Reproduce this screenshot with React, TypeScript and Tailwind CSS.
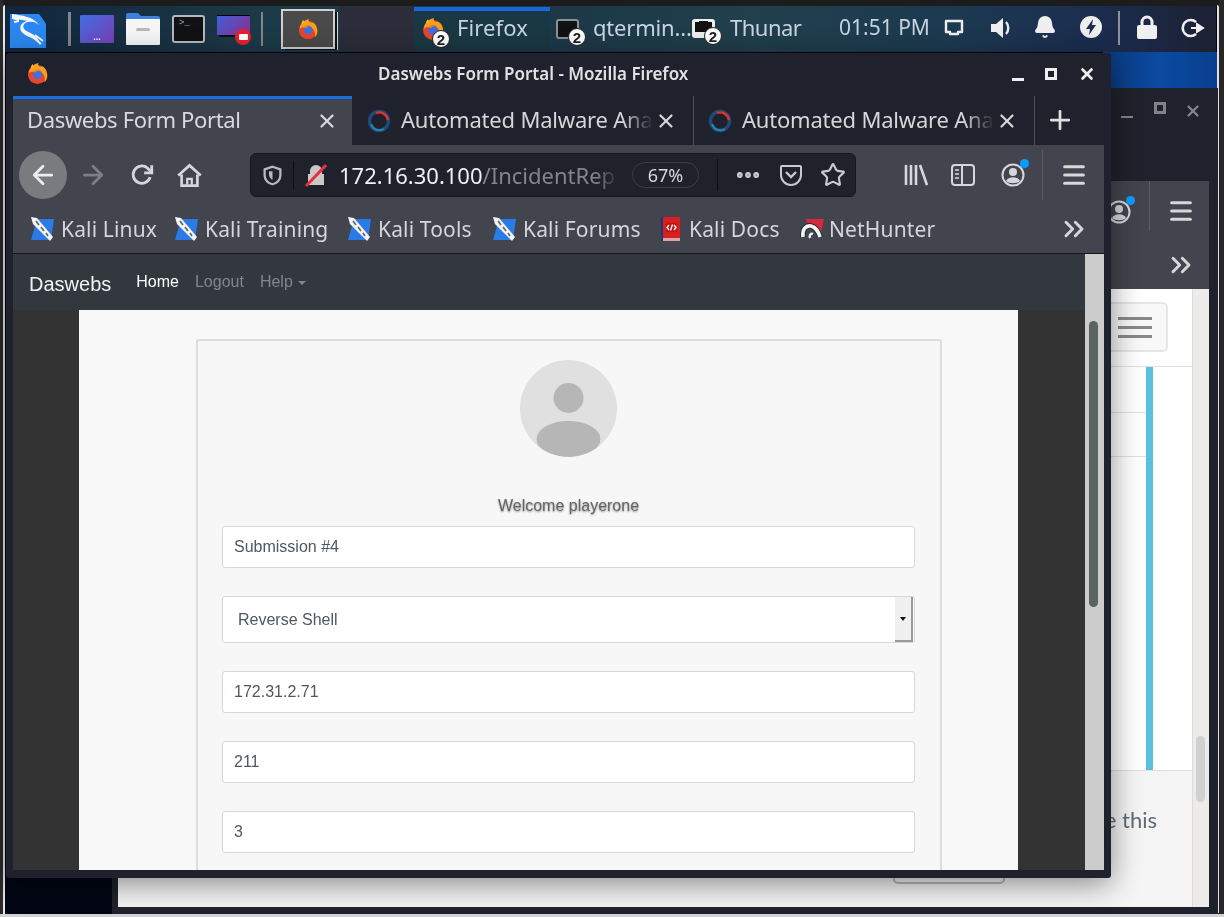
import React from "react";
import { ArrowLeft, ArrowRight, X, Plus, Star, Menu, ChevronsRight, Bell, MoreHorizontal } from "lucide-react";

function FirefoxIcon({ size = 24 }: { size?: number }) {
  return (
    <svg width={size} height={size} viewBox="0 0 24 24" className="shrink-0">
      <circle cx="12" cy="13" r="10" fill="#e8452c" />
      <path d="M3 12C3 6 8 2 13 1c-1 2 0 3 2 4 3-1 6 2 7 7 1 5-1 8-3 9 2-4 0-8-3-10-2-2-5-3-6-1-3 0-6 0-7 2z" fill="#f9a01b" />
      <path d="M5 6c0-1 1-3 2-4 0 2 1 3 2 3z" fill="#fbc02d" />
      <circle cx="12" cy="13" r="4.8" fill="#3f6fe0" />
      <path d="M7 10c2-2 6-3 9 0-2-1-5-1-6 1-1 0-2 0-3-1z" fill="#f57c1f" />
    </svg>
  );
}

function Badge({ className }: { className: string }) {
  return (
    <span className={`absolute flex h-[18px] w-[18px] items-center justify-center rounded-full border border-[#222] bg-white font-['Liberation_Sans',sans-serif] text-[15px] font-bold leading-none text-[#222] ${className}`}>
      2
    </span>
  );
}

function MalwareIcon() {
  return (
    <svg width="24" height="24" viewBox="0 0 24 24" className="shrink-0">
      <circle cx="12" cy="12" r="9.5" fill="none" stroke="#1f4a78" strokeWidth="3.4" />
      <path d="M9 4a9 9 0 0 1 12 7" fill="none" stroke="#e0322d" strokeWidth="2.4" />
      <path d="M4 15a9 9 0 0 0 13 5" fill="none" stroke="#2f83b8" strokeWidth="2" />
      <circle cx="12" cy="12" r="6.5" fill="#1f222c" />
    </svg>
  );
}

function KaliMark() {
  return (
    <svg width="26" height="26" viewBox="0 0 26 26" className="shrink-0">
      <path d="M8 3h17l-3 21H2z" fill="#2b7be6" />
      <path d="M2 1l6 1 16 19-3 4L4 8z" fill="#f4f4f4" />
      <path d="M7 5l3 4M12 11l3 4M17 17l2 3" stroke="#6a6a6a" strokeWidth="1.8" />
    </svg>
  );
}

function DocsMark() {
  return (
    <svg width="20" height="26" viewBox="0 0 20 26" className="shrink-0">
      <rect x="1" y="1" width="18" height="21" fill="#d81e1e" />
      <rect x="0" y="1" width="2" height="24" fill="#23356e" />
      <rect x="2" y="22" width="17" height="3" fill="#d8a6a6" />
      <rect x="5" y="7" width="11" height="9" rx="1" fill="#c01515" />
      <path d="M8 9l-2 2.5 2 2.5M13 9l2 2.5-2 2.5M11.5 8.5l-2 6" fill="none" stroke="#fff" strokeWidth="1.3" />
    </svg>
  );
}

function HunterMark() {
  return (
    <svg width="24" height="22" viewBox="0 0 24 22" className="shrink-0">
      <path d="M5 1h19l-4 18L9 7z" fill="#d8263c" />
      <path d="M3 19c-1-8 3-12 8-11 5 1 7 5 9 11" fill="none" stroke="#2a2a2a" strokeWidth="5.5" />
      <path d="M3 19c-1-8 3-12 8-11 5 1 7 5 9 11" fill="none" stroke="#f4f4f4" strokeWidth="3.6" />
      <path d="M10 20c-1-3 1-5 3-4" fill="none" stroke="#f4f4f4" strokeWidth="2.4" />
    </svg>
  );
}

function PanelIcons() {
  return (
    <div className="flex h-full items-center">
      <svg width="36" height="37" viewBox="0 0 36 37" className="ml-[10px] shrink-0">
        <path d="M0 3h29l3 4 4 6v24H0z" fill="#2a88f0" />
        <path d="M2 3c5 1 10 1 15 3 5 1 9 4 12 8-3-3-7-4-11-3-5 1-6 5-3 8 4 3 10 4 13 9 1 2 2 3 2 6-3-5-8-7-13-9-6-3-8-7-6-11 1-2 3-3 6-4-4-1-9-2-15-2z" fill="#f5f7fa" />
        <path d="M2 7l7 2M4 11l5-1M25 24l8 6M23 26l8 7" stroke="#f5f7fa" strokeWidth="1.8" />
      </svg>
      <div className="ml-[22px] h-[34px] w-[3px] shrink-0 bg-[#7f878c]" />
      <div className="ml-[9px] flex h-[28px] w-[34px] shrink-0 items-end justify-center rounded-[1px] bg-[linear-gradient(135deg,#3f6ee0,#7b3fb8)] pb-[1px] font-['Liberation_Sans',sans-serif] text-[9px] font-bold leading-[9px] text-white">...</div>
      <svg width="34" height="32" viewBox="0 0 34 32" className="ml-[12px] shrink-0">
        <path d="M0 2a2 2 0 0 1 2-2h10l3 3h17a2 2 0 0 1 2 2v6H0z" fill="#3c80e0" />
        <rect y="6" width="34" height="26" rx="1" fill="#f6f6f6" />
        <rect x="10" y="15" width="14" height="3" rx="1.5" fill="#b9b9b9" />
      </svg>
      <div className="ml-[12px] h-[28px] w-[33px] shrink-0 rounded-[3px] border-2 border-[#b5b8ba] bg-[#101214] pl-[5px] pt-[2px] font-['Liberation_Mono',monospace] text-[9px] leading-[9px] text-[#aaa]">&gt;_</div>
      <div className="relative ml-[12px] h-[28px] w-[33px] shrink-0">
        <div className="h-[20px] w-[33px] border-t border-black bg-[linear-gradient(135deg,#3f5fd8,#8b2f8f)]" />
        <div className="mx-[2px] h-[2px] bg-[#111]" />
        <div className="absolute left-[18px] top-[14px] flex h-[16px] w-[16px] items-center justify-center rounded-full bg-[#e8202c]">
          <div className="h-[6px] w-[9px] rounded-[1px] bg-white" />
        </div>
      </div>
      <div className="ml-[11px] h-[34px] w-[2px] shrink-0 bg-[#7f878c]" />
      <div className="relative ml-[18px] flex h-[40px] w-[54px] shrink-0 items-center justify-center border-2 border-[#d0d0d0] bg-[#4a4a4a] shadow-[3px_2px_0_-1px_#111,4px_2px_0_-1px_#d8d8d8]">
        <FirefoxIcon size={22} />
      </div>
    </div>
  );
}

function Task({ label, icon, active, width, tracking }: { label: string; icon: React.ReactNode; active?: boolean; width: string; tracking: string }) {
  return (
    <div className={`relative flex h-full shrink-0 items-center ${width} ${active ? "bg-[#1a3843]" : ""}`}>
      {active && <div className="absolute left-0 right-0 top-[1px] h-[4px] bg-[#1668d8]" />}
      {icon}
      <span className={`mb-[4px] whitespace-nowrap font-['Noto_Sans',sans-serif] text-[22px] leading-none text-[#c8d4e2] ${tracking}`}>{label}</span>
    </div>
  );
}

function TopPanel() {
  return (
    <div className="absolute left-0 right-[8px] top-[6px] flex h-[46px] items-center bg-[linear-gradient(90deg,#11253d_0%,#1c3a48_22%,#1c3847_45%,#213f4c_62%,#1c3a50_78%,#1b2d50_90%,#1c2032_100%)]">
      <div className="h-[46px] w-[340px] shrink-0"><PanelIcons /></div>
      <div className="h-full w-[74px] shrink-0 bg-[#2b2e3a]" />
      <Task
        active
        width="w-[136px]"
        label="Firefox"
        tracking="tracking-[0.1px]"
        icon={
          <span className="relative ml-[7px] mr-[15px] block h-[24px] w-[21px]">
            <FirefoxIcon size={24} />
            <Badge className="left-[11px] top-[13px]" />
          </span>
        }
      />
      <Task
        width="w-[136px]"
        label="qtermin…"
        tracking="tracking-[-0.2px]"
        icon={
          <span className="relative ml-[6px] mr-[15px] block h-[20px] w-[22px]">
            <span className="block h-[20px] w-[23px] rounded-[3px] border-2 border-[#8c9092] bg-[#101214]" />
            <Badge className="left-[12px] top-[9px]" />
          </span>
        }
      />
      <Task
        width="w-[153px]"
        label="Thunar"
        tracking="tracking-[-0.5px]"
        icon={
          <span className="relative ml-[6px] mr-[16px] block h-[20px] w-[22px]">
            <svg width="23" height="19" viewBox="0 0 23 19">
              <rect x="0" y="0" width="23" height="19" rx="3" fill="#eee" />
              <path d="M3 3h4v-1h9v1h4v10h-17z" fill="#111" />
            </svg>
            <Badge className="left-[12px] top-[8px]" />
          </span>
        }
      />
      <span className="mb-[4px] shrink-0 whitespace-nowrap font-['Noto_Sans',sans-serif] text-[21px] leading-none text-[#c8d4e2]">01:51 PM</span>
      <div className="flex shrink-0 items-center">
        <svg width="20" height="18" viewBox="0 0 20 18" className="ml-[14px] mb-[3px] shrink-0">
          <path d="M2 2h16v11h-4v2H6v-2H2z" fill="none" stroke="#efefef" strokeWidth="2.4" strokeLinejoin="round" />
        </svg>
        <svg width="26" height="26" viewBox="0 0 26 26" className="ml-[24px] mb-[3px] shrink-0">
          <path d="M3 9h5l7-6v20l-7-6H3z" fill="#efefef" />
          <path d="M18 7c3 3 3 9 0 12" fill="none" stroke="#efefef" strokeWidth="2.4" />
        </svg>
        <Bell size={24} className="ml-[19px] mb-[4px] shrink-0 fill-[#efefef] text-[#efefef]" />
        <svg width="22" height="22" viewBox="0 0 22 22" className="ml-[23px] mb-[4px] shrink-0">
          <circle cx="11" cy="11" r="11" fill="#efefef" />
          <path d="M13 3l-7 10h4l-1 6 7-10h-4z" fill="#1c2e4e" />
        </svg>
        <div className="ml-[16px] mb-[3px] h-[34px] w-[2px] shrink-0 bg-[#8d9499]" />
        <svg width="22" height="26" viewBox="0 0 22 26" className="ml-[16px] mb-[4px] shrink-0">
          <path d="M6 12V8a5 5 0 0 1 10 0v4" fill="none" stroke="#efefef" strokeWidth="3" />
          <rect x="1" y="11" width="20" height="14" rx="2" fill="#efefef" />
        </svg>
        <svg width="24" height="20" viewBox="0 0 24 20" className="ml-[23px] mb-[3px] shrink-0">
          <path d="M15 4a8 8 0 1 0 0 12" fill="none" stroke="#efefef" strokeWidth="2.6" />
          <path d="M10 10h8M16 6l6 4-6 4z" fill="#efefef" stroke="#efefef" strokeWidth="2" />
        </svg>
      </div>
    </div>
  );
}

function BrowserTab({ title }: { title: string }) {
  return (
    <div className="flex h-[49px] w-[341px] shrink-0 items-center border-r border-[#4a4d56] pl-[14px]">
      <MalwareIcon />
      <span className="mb-[2px] ml-[10px] w-[252px] whitespace-nowrap text-[22px] leading-normal tracking-[-0.2px] text-[#d4d6da] [mask-image:linear-gradient(90deg,#000_88%,transparent)]">{title}</span>
      <X size={22} strokeWidth={2.4} className="ml-[2px] text-[#d4d6da]" />
    </div>
  );
}

function Field({ value }: { value: string }) {
  return (
    <div className="flex h-[42px] items-center rounded-[3px] border border-[#d8d8d8] bg-white pl-[11px] text-[16px] text-[#50575e]">{value}</div>
  );
}

const bookmarks = [
  { label: "Kali Linux", width: "w-[144px]", icon: <KaliMark />, gap: "ml-[6px]" },
  { label: "Kali Training", width: "w-[173px]", icon: <KaliMark />, gap: "ml-[6px]" },
  { label: "Kali Tools", width: "w-[145px]", icon: <KaliMark />, gap: "ml-[6px]" },
  { label: "Kali Forums", width: "w-[170px]", icon: <KaliMark />, gap: "ml-[6px]" },
  { label: "Kali Docs", width: "w-[139px]", icon: <DocsMark />, gap: "ml-[8px]" },
  { label: "NetHunter", width: "w-[140px]", icon: <HunterMark />, gap: "ml-[5px]" },
];

function Firefox() {
  return (
    <div className="absolute left-[6px] top-[53px] z-10 h-[825px] w-[1105px] rounded-[3px] bg-[#1f222c] font-['Noto_Sans',sans-serif] shadow-[0_6px_30px_rgba(0,0,0,0.45)]">
      <div className="relative flex h-[43px] items-center">
        <span className="ml-[20px] mb-[3px]"><FirefoxIcon size={23} /></span>
        <span className="absolute left-[372px] top-[10px] whitespace-nowrap text-[17px] font-semibold leading-[22px] text-[#dfe1e5]">Daswebs Form Portal - Mozilla Firefox</span>
        <div className="ml-auto mr-[15px] mb-[1px] flex items-center gap-[21px]">
          <div className="mt-[10px] h-[3px] w-[12px] bg-[#eee]" />
          <div className="h-[12px] w-[12px] border-[3px] border-[#eee]" />
          <X size={18} strokeWidth={3.5} className="text-[#eee]" />
        </div>
      </div>
      <div className="ml-[7px] w-[1091px]">
        <div className="flex h-[49px] items-center">
          <div className="flex h-[49px] w-[339px] shrink-0 items-center border-t-[3px] border-[#1a6fe0] bg-[#42454e] pl-[14px]">
            <span className="mb-[7px] whitespace-nowrap text-[22px] leading-none tracking-[-0.35px] text-[#d8dadf]">Daswebs Form Portal</span>
            <X size={22} strokeWidth={2.4} className="ml-auto mr-[14px] mb-[2px] text-[#d8dadf]" />
          </div>
          <div className="w-[1px]" />
          <BrowserTab title="Automated Malware Ana" />
          <BrowserTab title="Automated Malware Ana" />
          <Plus size={30} strokeWidth={2.2} className="ml-[10px] mb-[2px] text-[#e0e0e0]" />
        </div>
        <div className="flex h-[60px] items-center bg-[#42454e] text-[#d6d7da]">
          <div className="ml-[6px] flex h-[48px] w-[48px] shrink-0 items-center justify-center rounded-full bg-[#7a7b7f]">
            <ArrowLeft size={30} strokeWidth={2.2} className="text-[#ecedee]" />
          </div>
          <ArrowRight size={30} strokeWidth={2.2} className="ml-[11px] shrink-0 text-[#7d7f85]" />
          <svg width="26" height="26" viewBox="0 0 24 24" className="ml-[21px] shrink-0">
            <path d="M19.5 14a8 8 0 1 1-2.5-8.5l3 3" fill="none" stroke="#d6d7da" strokeWidth="2.6" />
            <path d="M21 3v7h-7" fill="none" stroke="#d6d7da" strokeWidth="2.6" />
          </svg>
          <svg width="27" height="27" viewBox="0 0 24 24" className="ml-[21px] shrink-0">
            <path d="M2 12L12 3l10 9" fill="none" stroke="#d6d7da" strokeWidth="2.4" />
            <path d="M5 11v10h14V11" fill="none" stroke="#d6d7da" strokeWidth="2.4" />
            <path d="M10 20v-5h4v5" fill="none" stroke="#d6d7da" strokeWidth="2" />
          </svg>
          <div className="ml-[47px] flex h-[44px] w-[606px] shrink-0 items-center rounded-[6px] border border-[#15171d] bg-[#20222b]">
            <svg width="21" height="23" viewBox="0 0 24 24" className="ml-[11px] shrink-0">
              <path d="M12 2l9 3v7c0 5-4 9-9 10-5-1-9-5-9-10V5z" fill="none" stroke="#b8b9bd" strokeWidth="2.6" />
              <path d="M12 7h-4v4c0 2 2 5 4 6z" fill="#b8b9bd" />
            </svg>
            <div className="ml-[10px] h-[28px] w-[1px] shrink-0 bg-[#0c0d10]" />
            <svg width="22" height="24" viewBox="0 0 22 24" className="ml-[11px] shrink-0">
              <path d="M5 11V8a6 6 0 0 1 12 0v3M3 11h16v11H3z" fill="#c8c8c8" />
              <path d="M1 23L21 2" stroke="#e6303f" strokeWidth="3" />
            </svg>
            <span className="ml-[12px] w-[280px] shrink-0 overflow-hidden whitespace-nowrap text-[22px] leading-normal text-[#eff0f1] [mask-image:linear-gradient(90deg,#000_92%,transparent)]">
              172.16.30.100<span className="text-[#83858b]">/IncidentRep</span>
            </span>
            <div className="ml-[13px] flex h-[26px] w-[67px] shrink-0 items-center justify-center rounded-full border border-[#3a3d47] text-[18px] leading-none text-[#d6d7da]">67%</div>
            <div className="ml-[18px] h-[32px] w-[1px] shrink-0 bg-[#0c0d10]" />
            <MoreHorizontal size={28} strokeWidth={3} className="ml-[16px] shrink-0 text-[#c8c9cc]" />
            <svg width="24" height="24" viewBox="0 0 24 24" className="ml-[17px] shrink-0">
              <path d="M3 3h18a1 1 0 0 1 1 1v8a10 10 0 0 1-20 0V4a1 1 0 0 1 1-1z" fill="none" stroke="#c8c9cc" strokeWidth="2" />
              <path d="M7 9l5 5 5-5" fill="none" stroke="#c8c9cc" strokeWidth="2.4" />
            </svg>
            <Star size={26} strokeWidth={2} className="ml-[17px] shrink-0 text-[#c8c9cc]" />
          </div>
          <svg width="24" height="22" viewBox="0 0 24 22" className="ml-[48px] shrink-0">
            <path d="M2 1v20M7 1v20M12 1v20M16 1l7 20" stroke="#d6d7da" strokeWidth="2.6" fill="none" />
          </svg>
          <svg width="24" height="22" viewBox="0 0 24 22" className="ml-[23px] shrink-0">
            <rect x="1" y="1" width="22" height="20" rx="3" fill="none" stroke="#d6d7da" strokeWidth="2" />
            <path d="M11 1v20" stroke="#d6d7da" strokeWidth="2" />
            <path d="M4 6h4M4 10h4M4 14h4" stroke="#d6d7da" strokeWidth="1.6" />
          </svg>
          <span className="relative ml-[26px] block h-[24px] w-[24px] shrink-0">
            <svg width="24" height="24" viewBox="0 0 24 24">
              <circle cx="12" cy="12" r="10.5" fill="none" stroke="#d6d7da" strokeWidth="2" />
              <circle cx="12" cy="9" r="4" fill="#d6d7da" />
              <path d="M5 18c2-5 12-5 14 0-3 3-11 3-14 0z" fill="#d6d7da" />
            </svg>
            <span className="absolute -right-[4px] -top-[4px] h-[9px] w-[9px] rounded-full bg-[#0a9dff]" />
          </span>
          <div className="ml-[17px] h-[50px] w-[1px] shrink-0 bg-[#5a5d66]" />
          <Menu size={28} strokeWidth={2.6} className="ml-[17px] shrink-0" />
        </div>
        <div className="flex h-[48px] items-center bg-[#42454e] pl-[16px] text-[21px] leading-none tracking-[0.15px] text-[#d4d6da]">
          {bookmarks.map((b) => (
            <span key={b.label} className={`flex shrink-0 items-center ${b.width}`}>
              {b.icon}
              <span className={b.gap}>{b.label}</span>
            </span>
          ))}
          <ChevronsRight size={32} strokeWidth={2.2} className="ml-auto mr-[14px] shrink-0" />
        </div>
        <div className="h-[1px] bg-[#14161b]" />
        <div className="flex h-[616px] overflow-hidden font-['Liberation_Sans',sans-serif]">
          <div className="min-w-0 flex-1 bg-[#333333]">
            <div className="flex h-[56px] items-center bg-[#33373e] pl-[16px]">
              <span className="mt-[4px] text-[20px] text-[#f2f2f2]">Daswebs</span>
              <span className="ml-[25px] text-[16px] text-white">Home</span>
              <span className="ml-[16px] text-[16px] text-[#81868b]">Logout</span>
              <span className="ml-[16px] flex items-center text-[16px] text-[#81868b]">Help<span className="ml-[5px] mt-[1px] border-x-[4px] border-t-[4px] border-x-transparent border-t-[#81868b]" /></span>
            </div>
            <div className="ml-[66px] h-[560px] w-[939px] bg-[#f8f8f8] pl-[117px] pt-[29px]">
              <div className="h-[560px] w-[746px] rounded-[3px] border-2 border-[#dddddd] bg-[#f7f7f7] pl-[24px] pr-[25px] pt-[19px]">
                <svg width="97" height="97" viewBox="0 0 97 97" className="mx-auto block">
                  <defs>
                    <clipPath id="avatarClip"><circle cx="48.5" cy="48.5" r="48.5" /></clipPath>
                  </defs>
                  <circle cx="48.5" cy="48.5" r="48.5" fill="#e0e0e0" />
                  <circle cx="48.5" cy="38" r="15" fill="#b6b6b6" />
                  <ellipse cx="48.5" cy="79" rx="32" ry="18" fill="#b6b6b6" clipPath="url(#avatarClip)" />
                </svg>
                <p className="mt-[39px] text-center text-[16px] leading-[20px] text-[#666] [text-shadow:0_1px_2px_rgba(0,0,0,0.45)]">Welcome playerone</p>
                <div className="mt-[10px]"><Field value="Submission #4" /></div>
                <div className="mt-[28px] flex h-[47px] items-center justify-between rounded-[3px] border border-[#d8d8d8] bg-white pl-[15px] text-[16px] text-[#50575e]">
                  <span>Reverse Shell</span>
                  <span className="mr-[1px] flex h-[45px] w-[18px] items-center justify-center border-b-2 border-r-2 border-[#9a9a9a] bg-[#f0f0f0]">
                    <span className="border-x-[3px] border-t-[4px] border-x-transparent border-t-[#111]" />
                  </span>
                </div>
                <div className="mt-[28px]"><Field value="172.31.2.71" /></div>
                <div className="mt-[28px]"><Field value="211" /></div>
                <div className="mt-[28px]"><Field value="3" /></div>
              </div>
            </div>
          </div>
          <div className="relative w-[19px] shrink-0 bg-[#cccccc]">
            <div className="absolute left-[4px] top-[67px] h-[286px] w-[9px] rounded-full bg-[#5b6360]" />
          </div>
        </div>
      </div>
    </div>
  );
}

function BackWindow() {
  return (
    <div className="absolute left-[112px] top-[88px] flex h-[826px] w-[1106px] flex-col bg-[#1f222c] pb-[7px] pl-[6px] pr-[9px]">
      <div className="flex h-[93px] shrink-0 items-start justify-end pr-[7px] pt-[14px]">
        <div className="mt-[14px] h-[2px] w-[12px] bg-[#80838a]" />
        <div className="ml-[21px] h-[12px] w-[12px] border-[3px] border-[#80838a]" />
        <X size={18} strokeWidth={3} className="ml-[18px] text-[#80838a]" />
      </div>
      <div className="relative h-[108px] shrink-0 bg-[#42454e] text-[#d6d7da]">
        <span className="absolute right-[78px] top-[19px] block h-[24px] w-[24px]">
          <svg width="24" height="24" viewBox="0 0 24 24">
            <circle cx="12" cy="12" r="10.5" fill="none" stroke="#d6d7da" strokeWidth="2" />
            <circle cx="12" cy="9" r="4" fill="#d6d7da" />
            <path d="M5 18c2-5 12-5 14 0-3 3-11 3-14 0z" fill="#d6d7da" />
          </svg>
          <span className="absolute -right-[4px] -top-[4px] h-[9px] w-[9px] rounded-full bg-[#0a9dff]" />
        </span>
        <div className="absolute right-[59px] top-0 h-[50px] w-[1px] bg-[#5a5d66]" />
        <Menu size={28} strokeWidth={2.6} className="absolute right-[14px] top-[16px]" />
        <ChevronsRight size={32} strokeWidth={2.2} className="absolute right-[12px] top-[68px]" />
      </div>
      <div className="flex min-h-0 flex-1 flex-col bg-white">
        <div className="relative flex min-h-0 flex-1">
          <div className="relative flex-1">
            <div className="absolute right-[24px] top-[13px] flex h-[50px] w-[120px] flex-col items-end justify-center gap-[6px] rounded-[5px] border-2 border-[#e6e6e6] bg-[#f8f8f8] pr-[14px]">
              <div className="h-[3px] w-[34px] bg-[#888]" />
              <div className="h-[3px] w-[34px] bg-[#888]" />
              <div className="h-[3px] w-[34px] bg-[#888]" />
            </div>
            <div className="absolute inset-x-0 top-[77px] h-[1px] bg-[#e2e2e2]" />
            <div className="absolute left-0 top-[123px] h-[1px] w-[1028px] bg-[#e2e2e2]" />
            <div className="absolute left-0 top-[167px] h-[1px] w-[1028px] bg-[#e2e2e2]" />
            <div className="absolute right-[39px] top-[78px] h-[403px] w-[7px] bg-[#5bc0de]" />
            <div className="absolute inset-x-0 top-[481px] bottom-0 border-t border-[#dfdfdf] bg-[#f5f5f5] font-['Lato',sans-serif] text-[22px] text-[#5f6a75]">
              <span className="absolute right-[35px] top-[38px] whitespace-nowrap leading-none">Please use this</span>
              <div className="absolute bottom-[23px] right-[187px] h-[30px] w-[112px] rounded-[5px] border-2 border-[#bbb]" />
            </div>
          </div>
          <div className="relative w-[17px] shrink-0 border-l border-[#dcdbd9] bg-[#ecebe9]">
            <div className="absolute left-[3px] top-[447px] h-[66px] w-[9px] rounded-full bg-[#d0d0d0]" />
          </div>
        </div>
      </div>
    </div>
  );
}

export default function App() {
  return (
    <div className="relative h-[917px] w-[1224px] overflow-hidden bg-[#020614] [filter:blur(0.55px)]">
      <div className="absolute inset-x-0 top-0 h-[6px] bg-[#1c1c1c]" />
      <TopPanel />
      <div className="absolute bottom-0 left-0 top-0 w-[3px] bg-[#2b2b2b]" />
      <div className="absolute bottom-[3px] left-[3px] top-[5px] w-[2px] rounded-tl-[4px] bg-[#e8e8e8]" />
      <div className="absolute bottom-0 right-0 top-0 w-[5px] bg-[#262626]" />
      <div className="absolute bottom-[4px] right-[5px] top-[5px] w-[2px] rounded-tr-[4px] bg-[#e0e0e0]" />
      <div className="absolute right-[7px] top-[52px] h-[36px] w-[114px] bg-[linear-gradient(90deg,#0b3a80,#0a4aa0_50%,#0a3f8f)]" />
      <BackWindow />
      <Firefox />
      <div className="absolute inset-x-0 bottom-0 h-[3px] bg-[#d2d2d2]" />
    </div>
  );
}
